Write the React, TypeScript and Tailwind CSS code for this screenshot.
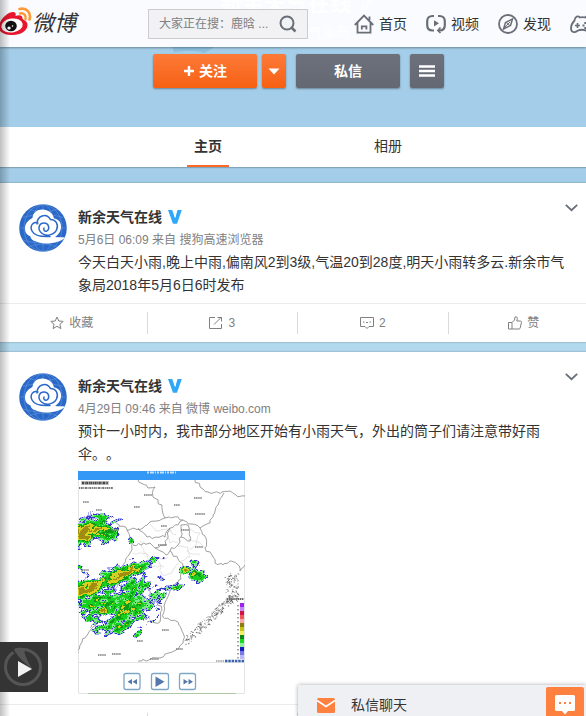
import type { ReactNode } from 'react';

/* ---------- icons ---------- */

function WeiboLogo() {
  return (
    <svg width="36" height="30" viewBox="0 0 36 30" className="shrink-0">
      <path d="M3 19C4 12 12 5 17 5c3 0 3 2 2.500 4C23 7.500 27 8 26.500 12c3 1.500 5 3 5 6 0 6-7 10-15 10C8 28 2 25 3 19z" fill="#e6162d" />
      <ellipse cx="16" cy="18.500" rx="10.800" ry="7" fill="#fff" transform="rotate(-8 16 18.500)" />
      <ellipse cx="15" cy="19" rx="5.800" ry="5.300" fill="#111" />
      <ellipse cx="13" cy="21" rx="1.700" ry="1.500" fill="#fff" />
      <circle cx="16.500" cy="19" r="0.800" fill="#fff" />
      <path d="M24 6.500c4-1 6.500 2 5.500 6" fill="none" stroke="#f93" strokeWidth="2.400" strokeLinecap="round" />
      <path d="M23.500 2c7-2 12 4 10 10.500" fill="none" stroke="#f93" strokeWidth="2.600" strokeLinecap="round" />
    </svg>
  );
}

function SearchIcon() {
  return (
    <svg width="18" height="18" viewBox="0 0 18 18" fill="none" stroke="#696e78" strokeWidth="2">
      <circle cx="8" cy="8" r="6.500" />
      <path d="M12.500 12.500l4 4" strokeWidth="2.500" />
    </svg>
  );
}

function HomeIcon() {
  return (
    <svg width="20" height="20" viewBox="0 0 20 20" fill="none" stroke="#696e78" strokeWidth="1.800">
      <path d="M0.800 11L10 1.500 19.200 11M3.500 9v9.600h13V9M15.500 6V2.500" />
      <path d="M7.800 15.500v-3.200h4.600v3.200" />
    </svg>
  );
}

function VideoIcon() {
  return (
    <svg width="20" height="20" viewBox="0 0 20 20" fill="none" stroke="#696e78" strokeWidth="2.200">
      <path d="M8 2H6.500C3 2 1.200 4.500 1.200 7v4c0 3.500 2 5.500 5.300 5.500H8" />
      <path d="M12 2h1.500c3.500 0 5.300 2.500 5.300 5v4c0 3-1.600 5.500-5 5.500H12" />
      <path d="M14.500 13.500L11.800 16.500l2.700 2.500" strokeWidth="1.600" />
      <path d="M8 6.200l5 3-5 3.200z" fill="#696e78" stroke="none" />
    </svg>
  );
}

function DiscoverIcon() {
  return (
    <svg width="20" height="20" viewBox="0 0 20 20" fill="none" stroke="#696e78" strokeWidth="1.800">
      <circle cx="10" cy="10" r="9" />
      <path d="M14.500 5l-2 6.500-7 3.500 2-6.500z" strokeWidth="1.500" />
      <path d="M8.500 9l3 2M6 14l6-6" strokeWidth="1" />
    </svg>
  );
}

function GameIcon() {
  return (
    <svg width="24" height="20" viewBox="0 0 24 20" fill="none" stroke="#696e78" strokeWidth="1.800">
      <path d="M4.500 6.500C5 2 8 1.500 10 3.500c2-.7 3-.7 5 0 2-2 4.500-1.500 5 3C22 9 23 12 23 14.500c0 4-4 4.500-6 2.500-3-1.500-7-1.500-10 0-2 2-6 1.500-6-2.500C1 12 2 9 4.500 6.500z" />
      <path d="M5 11.500h5M7.500 9v5" strokeWidth="1.700" />
      <path d="M12.500 11.500h2M16 11.500h2M14.300 9h2M14.300 14h2" strokeWidth="1.800" />
    </svg>
  );
}

function VerifiedIcon() {
  return (
    <svg width="14" height="14" viewBox="0 0 14 14" role="img" aria-label="认证">
      <path d="M0 0h4.200L7 8 8 5V0h5.800L9 13.800H5z" fill="#2fa8f8" />
      <path d="M7.500 0h2L7.200 8 6.500 6z" fill="#fff" />
    </svg>
  );
}

function StarIcon() {
  return (
    <svg width="14" height="14" viewBox="0 0 14 14" fill="none" stroke="#808080">
      <path d="M7 1l1.800 4 4.400.4-3.300 2.900 1 4.300L7 10.300l-3.900 2.300 1-4.300L.8 5.400l4.400-.4z" />
    </svg>
  );
}

function ShareIcon() {
  return (
    <svg width="14" height="14" viewBox="0 0 14 14" fill="none" stroke="#808080">
      <path d="M6 1.500H.5v11h12V8M5 8.500L12.500 1M8.500 1.500h4v4" />
    </svg>
  );
}

function CommentIcon() {
  return (
    <svg width="14" height="14" viewBox="0 0 14 14" fill="none" stroke="#808080">
      <path d="M.5 1.500h13v9H9l-2 2-2-2H.5z" />
      <path d="M3 6h1.500M6 6.500h2M9.500 6H11" />
    </svg>
  );
}

function LikeIcon() {
  return (
    <svg width="14" height="14" viewBox="0 0 14 14" fill="none" stroke="#808080">
      <path d="M.5 6.500H4v6.500H.5zM4 6.500L6.500 4 7 1c1.500-.7 2.500.3 2.300 1.700L8.800 5h4c.7.300.8 1 .6 1.700L12 12.500c-.3.300-.6.500-1 .5H4" />
    </svg>
  );
}

function Avatar() {
  return (
    <svg width="48" height="48" viewBox="0 0 48 48" className="shrink-0" role="img" aria-label="新余天气在线">
      <circle cx="24" cy="24" r="23.800" fill="#2b69c9" />
      <g fill="none" stroke="#8fb6ea" strokeWidth="0.500" opacity="0.700">
        <ellipse cx="24" cy="24" rx="11" ry="23.500" />
        <ellipse cx="24" cy="24" rx="19" ry="23.500" />
        <path d="M24 0v48M.5 24h47M4 13.500c12-4 28-4 40 0M4 36c12 4 28 4 40 0M10 5c9 4 19 4 28 0M10 43c9-4 19-4 28 0" />
      </g>
      <path d="M13.500 14C14 8.500 18 5.500 23.500 5.500S34 9 35 14.500c4.500.5 7.500 4 7 9-.3 4.500-3 7.500-6 9.500 3 .3 6 0 10 .5-3 4-17 8-26 5C13 36.500 12 35 11.500 32.500 7.500 31 6 28 6 24.500c0-4.500 2.500-8 7.500-10.500z" fill="#fff" />
      <path d="M19 19C14 17 10.500 22 13 27c2 4 9 6 18 5.500M18 20c0-8 9-12 13.500-4.500C37 15.500 40 21 37.500 26 35 31 27 33 22.500 29 18 25 20 19 25 19s6 6 3 7.800c-2 1.200-4-.800-3-2.800" fill="none" stroke="#2b69c9" strokeWidth="1.500" strokeLinecap="round" />
    </svg>
  );
}

/* ---------- radar picture ---------- */

type Echo = { x: number; y: number; rx: number; ry: number; tilt: number; power: number };

const ECHOES: Echo[] = [
  { x: 8, y: 60, rx: 18, ry: 9, tilt: -0.4, power: 1.15 },
  { x: 28, y: 61, rx: 9, ry: 8, tilt: 0.6, power: 0.75 },
  { x: 20, y: 46, rx: 8, ry: 5, tilt: 0.3, power: 0.42 },
  { x: 36, y: 50, rx: 6, ry: 2, tilt: -0.3, power: 0.35 },
  { x: 8, y: 118, rx: 20, ry: 7, tilt: -0.4, power: 1.05 },
  { x: 40, y: 104, rx: 22, ry: 7, tilt: -0.4, power: 1.05 },
  { x: 22, y: 132, rx: 24, ry: 12, tilt: 0, power: 0.62 },
  { x: 55, y: 120, rx: 15, ry: 15, tilt: 0, power: 0.62 },
  { x: 50, y: 137, rx: 20, ry: 13, tilt: 0, power: 0.68 },
  { x: 38, y: 153, rx: 17, ry: 7, tilt: -0.2, power: 0.6 },
  { x: 25, y: 139, rx: 5, ry: 4, tilt: 0, power: 0.9 },
  { x: 49, y: 131, rx: 6, ry: 3, tilt: 0, power: 0.9 },
  { x: 40, y: 154, rx: 5, ry: 3, tilt: 0, power: 0.95 },
  { x: 80, y: 124, rx: 13, ry: 6, tilt: -0.6, power: 0.36 },
  { x: 95, y: 116, rx: 8, ry: 3, tilt: -0.3, power: 0.55 },
  { x: 72, y: 90, rx: 14, ry: 3, tilt: -0.4, power: 0.32 },
  { x: 80, y: 109, rx: 7, ry: 3, tilt: -0.5, power: 0.34 },
  { x: 107, y: 99, rx: 4, ry: 3, tilt: 0, power: 1.1 },
  { x: 118, y: 104, rx: 8, ry: 5, tilt: 0.1, power: 0.8 },
  { x: 117, y: 92, rx: 6, ry: 3, tilt: 0.5, power: 0.45 },
  { x: 60, y: 162, rx: 4, ry: 2, tilt: -0.5, power: 0.7 },
  { x: 52, y: 69, rx: 3, ry: 2, tilt: 0, power: 0.6 },
  { x: 5, y: 99, rx: 6, ry: 2, tilt: 0.7, power: 0.36 },
  { x: 9, y: 146, rx: 5, ry: 3, tilt: 0.3, power: 0.55 },
];

const PALETTE: [number, string][] = [
  [1.05, '#a08c10'],
  [0.82, '#d8d020'],
  [0.68, '#109818'],
  [0.48, '#18d020'],
  [0.36, '#80e888'],
  [0.27, '#3838cc'],
  [0.2, '#a8a8f4'],
];

function hash(x: number, y: number) {
  const s = Math.sin(x * 127.1 + y * 311.7) * 43758.5453;
  return s - Math.floor(s);
}

function smooth(x: number, y: number) {
  const ix = Math.floor(x);
  const iy = Math.floor(y);
  const fx = x - ix;
  const fy = y - iy;
  const top = hash(ix, iy) * (1 - fx) + hash(ix + 1, iy) * fx;
  const bottom = hash(ix, iy + 1) * (1 - fx) + hash(ix + 1, iy + 1) * fx;
  return top * (1 - fy) + bottom * fy;
}

function radarCells() {
  const paths: Record<string, string> = {};
  for (let y = 40; y < 172; y++) {
    for (let x = 0; x < 130; x++) {
      let value = 0;
      for (const e of ECHOES) {
        const dx = x - e.x;
        const dy = y - e.y;
        const u = (dx * Math.cos(e.tilt) + dy * Math.sin(e.tilt)) / e.rx;
        const v = (-dx * Math.sin(e.tilt) + dy * Math.cos(e.tilt)) / e.ry;
        value = Math.max(value, e.power * Math.exp(-0.6 * Math.pow(u * u + v * v, 1.4)));
      }
      if (value < 0.07) continue;
      value += (smooth(x / 4 + y / 9, y / 3) - 0.5) * 0.8 + (hash(x, y) - 0.5) * 0.16;
      const band = PALETTE.find(([limit]) => value > limit);
      if (band) paths[band[1]] = (paths[band[1]] ?? '') + `M${x} ${y}h1v1h-1z`;
    }
  }
  return Object.entries(paths);
}

function border(points: [number, number][]) {
  let d = `M${points[0][0]} ${points[0][1]}`;
  for (let i = 1; i < points.length; i++) {
    const [ax, ay] = points[i - 1];
    const [bx, by] = points[i];
    const steps = Math.max(2, Math.round(Math.hypot(bx - ax, by - ay) / 3));
    for (let s = 1; s <= steps; s++) {
      const jx = s === steps ? 0 : (hash(ax + s, by) - 0.5) * 3;
      const jy = s === steps ? 0 : (hash(ay + s, bx) - 0.5) * 3;
      d += `L${(ax + ((bx - ax) * s) / steps + jx).toFixed(1)} ${(ay + ((by - ay) * s) / steps + jy).toFixed(1)}`;
    }
  }
  return d;
}

const PROVINCES: [number, number][][] = [
  [[60, 9], [70, 17], [77, 16], [75, 26], [84, 34], [87, 47], [72, 51], [65, 57], [49, 59], [35, 49]],
  [[117, 9], [122, 16], [130, 21], [144, 21], [152, 20], [158, 24], [167, 25]],
  [[146, 22], [140, 34], [135, 44], [132, 52], [122, 57], [128, 67], [127, 77], [134, 84], [137, 92], [145, 94], [152, 90], [159, 93], [162, 100], [167, 94]],
  [[87, 47], [100, 46], [105, 49], [122, 57]],
  [[49, 59], [55, 72], [52, 82], [45, 94]],
  [[60, 57], [69, 66], [87, 66], [92, 57], [100, 54], [105, 49]],
  [[55, 74], [72, 72], [77, 77], [88, 74], [92, 57]],
  [[103, 54], [103, 66], [112, 70], [110, 54], [103, 54]],
  [[77, 77], [88, 84], [92, 80], [100, 74], [103, 66]],
  [[92, 80], [100, 88], [105, 95], [103, 108], [95, 114], [92, 119], [86, 135], [85, 146], [100, 151], [105, 162], [105, 172], [98, 179], [82, 187], [60, 190]],
  [[69, 151], [82, 151], [84, 139], [78, 128]],
  [[0, 182], [4, 171], [14, 157], [19, 153]],
  [[69, 112], [72, 125], [69, 130]],
];

const DISTRICTS: [number, number][][] = [
  [[72, 53], [78, 60], [90, 58], [98, 64]],
  [[62, 70], [66, 82], [78, 88], [90, 86]],
  [[55, 82], [68, 82], [72, 95], [86, 96]],
  [[112, 58], [122, 62], [118, 74], [110, 80], [122, 84]],
  [[100, 76], [110, 76], [112, 86], [103, 90]],
  [[80, 90], [84, 104], [94, 102], [100, 92]],
  [[110, 68], [122, 72], [127, 77]],
  [[88, 66], [92, 72], [100, 70]],
];

const PLACES: [number, number, number][] = [
  [5, 31, 6], [66, 24, 8], [56, 36, 6], [96, 34, 6], [116, 27, 8], [117, 43, 10], [18, 39, 6],
  [34, 59, 7], [83, 55, 6], [103, 59, 8], [80, 74, 9], [117, 76, 8], [4, 99, 7], [20, 184, 8],
  [34, 183, 9], [59, 170, 6], [84, 159, 7], [98, 178, 7], [72, 188, 9],
];

const SCALE = ['#a020f0', '#c488fa', '#d81048', '#f05858', '#f8a8a8', '#8c7c08', '#c8c010', '#f0f060', '#108818', '#18d820', '#90f098', '#1818c0', '#7878e8', '#b8b8fa'];

function coastDots() {
  let d = '';
  for (let i = 0; i < 170; i++) {
    const t = hash(i, 3);
    const spread = (hash(i, 7) - 0.5) * 7;
    const x = 106 + t * 49 + spread * 0.6;
    const y = 172 - t * 46 + spread;
    d += `M${x.toFixed(1)} ${y.toFixed(1)}l${(hash(i, 9) * 3 - 1).toFixed(1)} ${(hash(i, 11) * 3 - 1.5).toFixed(1)}`;
  }
  for (let i = 0; i < 80; i++) {
    const x = 149 + hash(i, 21) * 12 - hash(i, 24) * 2;
    const y = 102 + hash(i, 23) * 28;
    d += `M${x.toFixed(1)} ${y.toFixed(1)}l${(hash(i, 25) * 3 - 1).toFixed(1)} ${(hash(i, 27) * 3 - 1).toFixed(1)}`;
  }
  return d;
}

function RadarPicture() {
  return (
    <svg width="167" height="223" viewBox="0 0 167 223" className="block bg-white" role="img" aria-label="雷达图">
      <path d="M.5 0v222.500h166V0M0 191.500h167" fill="none" stroke="#e2e5e8" />
      <g fill="none" stroke="#dcdcdc" strokeWidth="0.800">
        {DISTRICTS.map((points, i) => <path key={i} d={border(points)} />)}
      </g>
      <g fill="none" stroke="#888" strokeWidth="0.800">
        {PROVINCES.map((points, i) => <path key={i} d={border(points)} />)}
      </g>
      {radarCells().map(([color, d]) => <path key={color} d={d} fill={color} />)}
      <path d={coastDots()} fill="none" stroke="#444" strokeWidth="0.700" />
      <g stroke="#777" strokeWidth="1.300" strokeDasharray="1.500 0.600">
        {PLACES.map(([x, y, w]) => <path key={`${x}-${y}`} d={`M${x} ${y}h${w}`} />)}
      </g>
      <rect width="167" height="9" fill="#3499f6" />
      <path d="M69 1.500h30" stroke="#c3e0fb" strokeWidth="2" strokeDasharray="2 1 4 1 1 1" />
      <rect x="3" y="10" width="28" height="4" fill="#ccc" />
      <path d="M4 12h26" stroke="#444" strokeWidth="2.500" strokeDasharray="2 0.700 1 0.500" />
      <path d="M1 17h34" stroke="#777" strokeWidth="2" strokeDasharray="1 0.700 2 0.600" />
      {SCALE.map((color, i) => <rect key={color} x="162" y={132 + i * 4} width="4" height="4" fill={color} />)}
      <path d="M160 134v54" stroke="#888" strokeWidth="1.500" strokeDasharray="1.500 2.500" />
      <path d="M149 128h17" stroke="#666" strokeWidth="2" strokeDasharray="1.500 0.600" />
      <path d="M138 190h8" stroke="#666" strokeDasharray="1.500 0.700" />
      <path d="M147 190h19" stroke="#3a62b0" strokeWidth="2.500" strokeDasharray="2.500 0.800" />
      <g fill="#fff" stroke="#7da7c4" strokeWidth="1.300">
        <rect x="46" y="202.500" width="16" height="16" rx="2" />
        <rect x="73.500" y="202.500" width="17" height="16" rx="2" />
        <rect x="101.500" y="202.500" width="16" height="16" rx="2" />
      </g>
      <path d="M54 208v5.500l-4.500-2.700zM59 208v5.500l-4.500-2.700zM77.500 205.500v10.500l9-5.200zM105.500 208v5.500l4.500-2.700zM110.500 208v5.500l4.500-2.700z" fill="#5577ac" />
      <path d="M10 222.500h148" stroke="#b0c8a4" />
    </svg>
  );
}

/* ---------- page pieces ---------- */

function NavLink({ icon, label }: { icon: ReactNode; label: string }) {
  return (
    <a href="#" className="flex shrink-0 items-center gap-[5px] text-sm text-[#333]">
      {icon}
      {label}
    </a>
  );
}

function Header() {
  return (
    <header className="relative z-10 flex h-[47px] items-center overflow-hidden bg-[#f9fbfe] shadow-[0_1px_2px_rgba(0,0,0,0.35)]">
      <div aria-hidden="true" className="absolute -top-3 left-[220px] whitespace-nowrap text-white">
        <p className="text-[22px] leading-8 font-bold">新余天气在线 ♂</p>
        <p className="pl-[46px] text-sm leading-6">新余市气象局</p>
      </div>
      <a href="#" className="relative -ml-1 flex w-[152px] shrink-0 items-center text-[#333]">
        <span className="-mt-1"><WeiboLogo /></span>
        <span className="text-[22px] leading-6 italic">微博</span>
      </a>
      <form className="relative flex h-[30px] w-[160px] shrink-0 items-center border border-[#ccc] bg-[#f2f2f5]">
        <input
          type="text"
          aria-label="搜索"
          placeholder="大家正在搜：鹿晗 ..."
          className="min-w-0 flex-1 bg-transparent pl-[10px] text-xs text-[#333] outline-none placeholder:text-[#808080]"
        />
        <button type="button" aria-label="搜索" className="mr-[10px]"><SearchIcon /></button>
      </form>
      <nav className="relative ml-[46px] flex shrink-0 items-center gap-[19px]">
        <NavLink icon={<HomeIcon />} label="首页" />
        <NavLink icon={<VideoIcon />} label="视频" />
        <NavLink icon={<DiscoverIcon />} label="发现" />
        <a href="#" aria-label="游戏"><GameIcon /></a>
      </nav>
    </header>
  );
}

function ProfileActions() {
  const orange = 'h-[34px] rounded-[2px] bg-linear-to-b from-[#fd7a37] to-[#f6600f] text-white shadow-[0_1px_2px_rgba(0,0,0,0.35)]';
  const gray = 'h-[34px] rounded-[2px] bg-linear-to-b from-[#6d717b] to-[#646873] text-white shadow-[0_1px_2px_rgba(0,0,0,0.35)]';
  return (
    <section className="relative flex h-20 justify-center pt-[7px] pl-[11px]">
      <svg width="42" height="6" viewBox="0 0 42 6" className="absolute top-0 left-[172px]" aria-hidden="true">
        <path d="M0 0h42c-4 3-7 5-10 6C24 3 12 4 2 5z" fill="#8bbede" />
      </svg>
      <div className="relative flex">
        <button type="button" className={`${orange} flex w-[104px] items-center justify-center gap-1 text-sm font-bold`}>
          <svg width="12" height="12" viewBox="0 0 12 12" stroke="#fff" strokeWidth="2.400"><path d="M6 1v10M1 6h10" /></svg>
          关注
        </button>
        <button type="button" aria-label="更多关注选项" className={`${orange} ml-[5px] flex w-6 items-center justify-center`}>
          <svg width="12" height="7" viewBox="0 0 12 7"><path d="M.5.500h11L6 6.500z" fill="#fff" /></svg>
        </button>
        <button type="button" className={`${gray} ml-[10px] w-[104px] text-sm font-bold`}>私信</button>
        <button type="button" aria-label="菜单" className={`${gray} ml-[10px] flex w-[34px] items-center justify-center`}>
          <svg width="16" height="12" viewBox="0 0 16 12" stroke="#fff" strokeWidth="2.400"><path d="M0 1.500h16M0 6h16M0 10.500h16" /></svg>
        </button>
      </div>
    </section>
  );
}

function Tabs() {
  return (
    <nav className="flex h-10 gap-[138px] bg-white pl-[187px] text-sm text-[#333] shadow-[0_1px_1px_rgba(0,0,0,0.2)]">
      <a href="#" className="flex w-[42px] justify-center border-b-2 border-[#f96a28] leading-[38px] font-bold">主页</a>
      <a href="#" className="flex w-[42px] justify-center leading-[38px]">相册</a>
    </nav>
  );
}

type PostProps = { meta: string; via: string; text: string; picture?: ReactNode; shares: string; comments: string };

function Post({ meta, via, text, picture, shares, comments }: PostProps) {
  return (
    <article className="bg-white shadow-[0_0_1px_1px_rgba(0,0,0,0.1)]">
      <div className={`flex gap-[11px] pt-[21px] pr-[18px] pl-[19px] ${picture ? 'pb-[10px]' : 'pb-[6px]'}`}>
        <Avatar />
        <div className="relative min-w-0 flex-1 pt-px">
          <button type="button" aria-label="展开" className="absolute top-0 -right-[10px]">
            <svg width="13" height="8" viewBox="0 0 13 8" fill="none" stroke="#696e78" strokeWidth="1.800"><path d="M.8.800l5.700 5.400L12.200.800" /></svg>
          </button>
          <h2 className="flex h-6 items-center gap-[6px] text-sm font-bold text-[#333]">
            <a href="#">新余天气在线</a>
            <VerifiedIcon />
          </h2>
          <p className="text-xs leading-[22px] text-[#808080]">
            <a href="#">{meta}</a> 来自 <a href="#">{via}</a>
          </p>
          <p className="text-sm leading-[23px] text-[#333] [text-spacing-trim:space-all]">{text}</p>
          {picture && <div className="pt-[5px]">{picture}</div>}
        </div>
      </div>
      <footer className="overflow-hidden border-t border-[#ececec]">
        <div className="-mr-[13px] -ml-[3px] grid h-[38px] grid-cols-4 py-2 text-xs text-[#808080]">
          <button type="button" className="flex items-center justify-center gap-[5px] border-r border-[#d9d9d9]"><StarIcon />收藏</button>
          <button type="button" className="flex items-center justify-center gap-[5px] border-r border-[#d9d9d9]"><ShareIcon />{shares}</button>
          <button type="button" className="flex items-center justify-center gap-[5px] border-r border-[#d9d9d9]"><CommentIcon />{comments}</button>
          <button type="button" className="flex items-center justify-center gap-[5px]"><LikeIcon />赞</button>
        </div>
      </footer>
    </article>
  );
}

function PlayerToggle() {
  return (
    <button type="button" aria-label="播放" className="absolute bottom-6 left-0 z-30 h-[50px] w-12 bg-[#343434]">
      <svg width="48" height="50" viewBox="0 0 48 50">
        <circle cx="23" cy="25" r="17.500" fill="none" stroke="#555" strokeWidth="3" />
        <path d="M14 7c5-2 9-1 11 0-1 3-1 5 7 20-6-5-14-11-18-20z" fill="#555" />
        <path d="M12 7l3 4" stroke="#343434" strokeWidth="2" />
        <path d="M18 19v16l14-8z" fill="#f2f2f2" />
      </svg>
    </button>
  );
}

function ChatBar() {
  return (
    <aside className="absolute right-0 bottom-0 z-30 flex h-[31px] w-[288px] items-start bg-[#eff0f4] pt-[2px] pr-[2px] shadow-[0_0_4px_rgba(0,0,0,0.35)]">
      <button type="button" className="flex h-9 flex-1 items-center gap-4 pl-[19px] text-sm text-[#333]">
        <svg width="18" height="15" viewBox="0 0 18 15">
          <rect width="18" height="15" rx="1.500" fill="#ff8140" />
          <path d="M0 2.500l9 6 9-6" fill="none" stroke="#fff" strokeWidth="1.600" />
        </svg>
        私信聊天
      </button>
      <button type="button" aria-label="聊天" className="flex h-9 w-[38px] items-center justify-center rounded-[2px] bg-[#ff8140]">
        <svg width="20" height="20" viewBox="0 0 20 20">
          <path d="M1.500 0h17A1.500 1.500 0 0 1 20 1.500v13a1.500 1.500 0 0 1-1.500 1.500H13l-3 3.500L7 16H1.500A1.500 1.500 0 0 1 0 14.500v-13A1.500 1.500 0 0 1 1.500 0z" fill="#fff" />
          <path d="M4 8h2M9 8h2M14 8h2" stroke="#ff8140" strokeWidth="2" />
        </svg>
      </button>
    </aside>
  );
}

export default function App() {
  return (
    <div className="relative h-screen overflow-hidden bg-[#b3d9ee] font-['Liberation_Sans','Noto_Sans_CJK_SC',sans-serif]">
      <div className="bg-[#a3cde8]">
        <Header />
        <ProfileActions />
        <Tabs />
        <div className="h-4" />
      </div>
      <main className="relative flex flex-col gap-[10px]">
        <Post
          meta="5月6日 06:09"
          via="搜狗高速浏览器"
          text="今天白天小雨,晚上中雨,偏南风2到3级,气温20到28度,明天小雨转多云.新余市气象局2018年5月6日6时发布"
          shares="3"
          comments="2"
        />
        <Post
          meta="4月29日 09:46"
          via="微博 weibo.com"
          text="预计一小时内，我市部分地区开始有小雨天气，外出的筒子们请注意带好雨伞。。"
          picture={<RadarPicture />}
          shares="转发"
          comments="评论"
        />
      </main>
      <div className="pointer-events-none absolute inset-y-0 left-0 z-20 w-[10px] bg-linear-to-r from-black/25 to-transparent" />
      <PlayerToggle />
      <ChatBar />
    </div>
  );
}
